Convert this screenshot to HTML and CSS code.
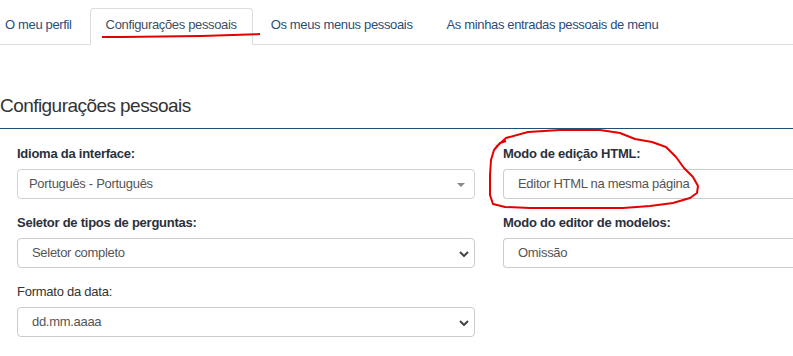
FILE: index.html
```html
<!DOCTYPE html>
<html lang="pt">
<head>
    <meta charset="UTF-8">
    <meta name="viewport" content="width=device-width, initial-scale=1.0">
    <title>Configurações pessoais</title>
    <link rel="stylesheet" href="styles.css">
</head>
<body>
    <ul class="nav-tabs">
        <li><a href="#">O meu perfil</a></li>
        <li class="active"><a href="#">Configurações pessoais</a></li>
        <li><a href="#">Os meus menus pessoais</a></li>
        <li><a href="#">As minhas entradas pessoais de menu</a></li>
    </ul>

    <h2 class="page-title">Configurações pessoais</h2>

    <div class="form-row">
        <div class="form-col">
            <div class="form-group">
                <label>Idioma da interface:</label>
                <div class="field select2">Português - Português</div>
            </div>
            <div class="form-group">
                <label>Seletor de tipos de perguntas:</label>
                <div class="field native">
                    Seletor completo
                    <svg class="chevron" width="10" height="6" viewBox="0 0 10 6"><path d="M1 1 L5 5 L9 1" fill="none" stroke="#444" stroke-width="2"/></svg>
                </div>
            </div>
            <div class="form-group">
                <label class="light">Formato da data:</label>
                <div class="field native">
                    dd.mm.aaaa
                    <svg class="chevron" width="10" height="6" viewBox="0 0 10 6"><path d="M1 1 L5 5 L9 1" fill="none" stroke="#444" stroke-width="2"/></svg>
                </div>
            </div>
        </div>
        <div class="form-col">
            <div class="form-group">
                <label>Modo de edição HTML:</label>
                <div class="field wide">Editor HTML na mesma página</div>
            </div>
            <div class="form-group">
                <label>Modo do editor de modelos:</label>
                <div class="field wide">Omissão</div>
            </div>
        </div>
    </div>

    <!-- hand-drawn marks on the screenshot -->
    <svg class="marks" width="793" height="356" viewBox="0 0 793 356">
        <path d="M102 37 Q180 37.5 260 34" fill="none" stroke="#e50000" stroke-width="2"/>
        <polyline fill="none" stroke="#e50000" stroke-width="2" stroke-linejoin="round"
            points="496,147 506,138 528,132 560,130 600,130 620,133 635,139 652,142 666,147 676,157 684,168 693,177 698,186 697,193 690,198 673,203 650,206 623,208 590,208 560,208 530,208 505,207 493,204 490,195 490,175 491,160 494,150 500,143 506,141"/>
    </svg>
</body>
</html>
```

FILE: styles.css
```css
* {
    margin: 0;
    padding: 0;
    box-sizing: border-box;
    font-family: 'Liberation Sans', Arial, sans-serif;
}

html, body {
    overflow: hidden;
}

body {
    position: relative;
    width: 793px;
    height: 356px;
    background: #fff;
    color: #333;
    font-size: 13px;
}

.nav-tabs {
    list-style: none;
    display: flex;
    padding-top: 8px;
    border-bottom: 1px solid #ddd;
}

.nav-tabs li {
    margin-right: 2px;
    margin-bottom: -1px;
}

.nav-tabs a {
    display: block;
    padding: 7px 15px 10px;
    line-height: 18px;
    font-size: 13px;
    letter-spacing: -0.35px;
    color: #2a4e7c;
    text-decoration: none;
    border: 1px solid transparent;
    border-radius: 4px 4px 0 0;
}

/* first tab is cut by the left edge */
.nav-tabs li:first-child a {
    padding-left: 4px;
}

.nav-tabs .active a {
    color: #3f4f63;
    background: #fff;
    border-color: #ddd #ddd transparent;
}

.page-title {
    margin-top: 50px;
    padding-bottom: 12px;
    font-size: 19px;
    line-height: 21px;
    letter-spacing: -0.55px;
    font-weight: normal;
    color: #333;
    border-bottom: 1px solid #1f4e79;
}

.form-row {
    display: grid;
    grid-template-columns: 458px 1fr;
    column-gap: 28px;
    padding: 16px 0 0 17px;
}

.form-group {
    margin-bottom: 15px;
}

label {
    display: block;
    margin-bottom: 6px;
    line-height: 18px;
    font-size: 13px;
    letter-spacing: -0.25px;
    font-weight: bold;
    color: #2b313b;
    white-space: nowrap;
}

label.light {
    font-weight: normal;
    color: #333;
}

.field {
    position: relative;
    height: 30px;
    line-height: 28px;
    padding-left: 14px;
    border: 1px solid #ccc;
    border-radius: 4px;
    font-size: 13px;
    letter-spacing: -0.3px;
    color: #555;
    background: #fff;
    white-space: nowrap;
}

.field.wide {
    border-right: none;
    border-radius: 4px 0 0 4px;
}

.field.select2 {
    padding-left: 11px;
    border-color: #d2d2d2;
}

.field.select2::after {
    content: '';
    position: absolute;
    right: 9px;
    top: 13px;
    border-left: 4px solid transparent;
    border-right: 4px solid transparent;
    border-top: 4px solid #888;
}

.chevron {
    position: absolute;
    right: 5px;
    top: 12px;
}

.marks {
    position: absolute;
    top: 0;
    left: 0;
    pointer-events: none;
}
```
